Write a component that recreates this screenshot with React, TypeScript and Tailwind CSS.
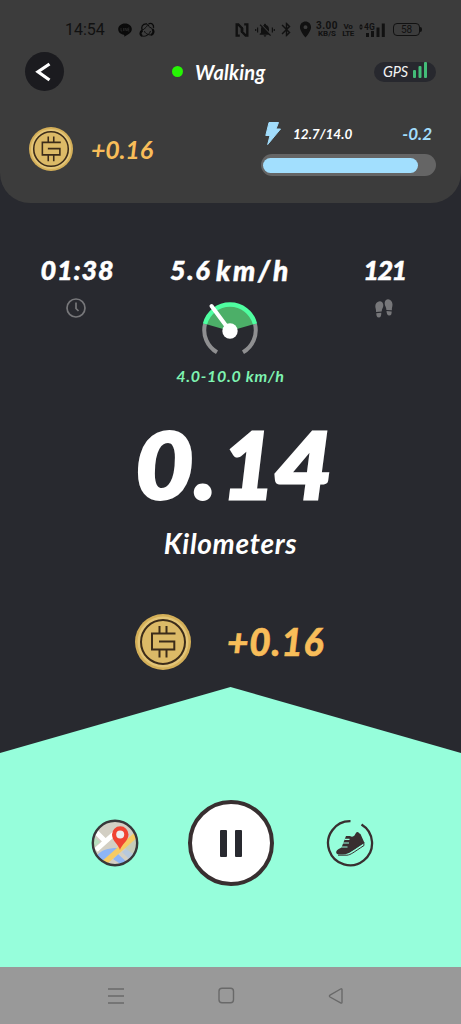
import type { ReactNode } from "react";
import { MdBluetooth, MdLocationOn, MdNotificationsOff } from "react-icons/md";

function Coin({ className }: { className: string }) {
  return (
    <svg viewBox="0 0 56 56" className={className} aria-hidden="true">
      <circle cx="28" cy="28" r="28" fill="#d4af58" />
      <circle cx="28" cy="28" r="25.5" fill="#e3c577" />
      <circle cx="28" cy="28" r="22" fill="#dcba67" stroke="#3c2c1a" strokeWidth="2" />
      <path
        d="M40.500 19.600H17V35.500H39.300V27.500H24M24.500 12V19.500M31.500 12V19.500M24.500 36V43.500M31.500 36V43.500"
        fill="none"
        stroke="#3c2c1a"
        strokeWidth="2"
      />
    </svg>
  );
}

function StatusBar() {
  return (
    <div className="flex h-[50px] items-center pl-[65px] pt-[9px] text-[#111]">
      <span className="w-[53px] font-['Roboto'] text-[16px] leading-4">14:54</span>
      <svg viewBox="0 0 14 14" className="h-[14px] w-[14px]">
        <path d="M7 .5C3 .5.2 3 .2 6.3c0 3 2.500 5 5.600 5.500.8.2.5 1.200.5 1.900 3-1.500 7.500-4 7.500-7.400C13.800 3 11 .5 7 .5Z" fill="#0a0a0a" />
        <path d="M3 5v3h1.300M5.500 5v3M7 8V5l2 3V5M11.500 5H10v3h1.500M10 6.500h1.300" fill="none" stroke="#333" strokeWidth=".6" />
      </svg>
      <svg viewBox="0 0 16 16" className="ml-[7px] h-4 w-4" fill="none" stroke="#0a0a0a">
        <path d="M3.500 8.500C1.500 5 3.500 1.500 8 2M9.500 1.800c3.500-1.300 5.500 1 5 4" strokeWidth="1.300" />
        <path d="M3.500 8.500C1 10 .8 12.500 3 14M13.500 7c1.700 2.500 1 5-1.500 6" strokeWidth="2.200" />
        <path d="M4 8c1-1.500 3.500-2 5-6M3 14c3.500 1 7-1 8.500-5M9.500 3c-.5 2 2.500 2.500 4 4M5.500 9c0 2 3.500 4 6.500 4" strokeWidth="1" />
      </svg>
      <svg viewBox="0 0 14 14" className="ml-[80px] h-[14px] w-[14px]" fill="none" stroke="#111" strokeWidth="2.400">
        <path d="M4.800 12.600H1.700V1.500h1.600L7.200 5.500V10M9.200 1.400h3.100v11.100h-1.600L6.800 8.500V4" />
      </svg>
      <span className="relative ml-[6px] flex w-[20px] justify-center">
        <MdNotificationsOff size={16} />
        <svg viewBox="0 0 20 16" className="absolute inset-0 h-4 w-5" stroke="currentColor" strokeWidth="1.200">
          <path d="M.7 7v2M2.600 5.500v5M17.400 5.500v5M19.300 7v2" />
        </svg>
      </span>
      <MdBluetooth size={17} className="ml-[3px]" />
      <MdLocationOn size={19} className="ml-[1px]" />
      <span className="ml-[1px] flex w-[22px] flex-col items-center whitespace-nowrap font-['Roboto'] font-bold">
        <span className="text-[10px] leading-[8px] tracking-[0.5px]">3.00</span>
        <span className="text-[8px] leading-[8px]">KB/S</span>
      </span>
      <span className="ml-[5px] flex w-[10px] flex-col items-center font-['Roboto'] text-[8px] font-bold leading-[7px] tracking-[-0.4px]">
        <span>Vo</span>
        <span>LTE</span>
      </span>
      <span className="relative ml-[6px] h-4 w-[26px]">
        <svg viewBox="0 0 26 16" className="h-4 w-[26px]" fill="currentColor">
          <path d="m0 4.500 2-2.500 2 2.500ZM0 5.500l2 2.500 2-2.500ZM7 11h3v4H7ZM12 9h3v6h-3ZM17.500 5.500h3V15h-3ZM22.800 1.500h3V15h-3Z" />
        </svg>
        <span className="absolute left-[5px] top-[1px] font-['Roboto'] text-[8.500px] font-bold leading-[8px]">4G</span>
      </span>
      <span className="ml-[8px] flex h-[13px] w-[27px] items-center justify-center rounded-[4px] border border-[#111] font-['Roboto'] text-[10px] leading-none">
        58
      </span>
      <span className="h-[5px] w-[2px] rounded-r-full bg-[#111]" />
    </div>
  );
}

function TopPanel() {
  return (
    <header className="h-[203px] rounded-b-[30px] bg-[#3c3c3c]">
      <StatusBar />
      <div className="flex h-[43px] items-center pl-[25px] pr-[25px]">
        <button type="button" aria-label="Back" className="grid h-[39px] w-[39px] place-items-center rounded-full bg-[#1b1b1f]">
          <svg viewBox="0 0 16 20" className="mr-[3px] h-5 w-4" fill="none" stroke="#fff" strokeWidth="3.200">
            <path d="M14.500 2 3 9.800l11.500 8.200" />
          </svg>
        </button>
        <span className="ml-[108px] h-[11px] w-[11px] rounded-full bg-[#26f404]" />
        <h1 className="ml-[12px] w-[120px] text-[20px] font-bold italic leading-6 tracking-[0.2px] text-white">Walking</h1>
        <div className="ml-auto flex h-[20px] w-[62px] items-center rounded-full bg-[#27282e] pl-[9px] text-[#f2f2f2]">
          <span className="w-[30px] text-[14.500px] italic leading-5 tracking-[-0.1px]">GPS</span>
          <svg viewBox="0 0 14 16" className="mb-[4px] h-4 w-[14px]" fill="#43bd78">
            <rect x="0" y="8" width="3" height="8" rx="1" />
            <rect x="5.500" y="4" width="3" height="12" rx="1" />
            <rect x="11" y="0" width="3" height="16" rx="1" />
          </svg>
        </div>
      </div>
      <div className="flex justify-between pl-[29px] pr-[25px] pt-[26px]">
        <div className="flex h-[59px] items-center">
          <Coin className="h-[44px] w-[44px]" />
          <span className="ml-[18px] mt-[1px] text-[25px] font-bold italic leading-8 tracking-[-0.2px] text-[#f8bd59]">+0.16</span>
        </div>
        <div className="w-[175px]">
          <div className="flex h-[29px] items-center pl-[4px] pr-[4px]">
            <svg viewBox="0 0 16 23" className="mr-[12px] h-[23px] w-4" fill="#a2ddfc">
              <path d="M4 .5h9.500L11 7h4.500L2.700 22.500 5 13.500H.8Z" stroke="#a2ddfc" strokeLinejoin="round" />
            </svg>
            <span className="text-[13.500px] font-bold italic leading-5 text-white">12.7/14.0</span>
            <span className="ml-auto text-[17px] font-bold italic leading-5 text-[#a2ddfc]">-0.2</span>
          </div>
          <div className="mt-[6px] flex h-[22px] items-center rounded-full bg-[#656565] pl-[2px]">
            <div className="h-[15px] w-[155px] rounded-full bg-[#a2dffe]" />
          </div>
        </div>
      </div>
    </header>
  );
}

function Stat({ value, children }: { value: ReactNode; children: ReactNode }) {
  return (
    <div className="flex flex-col items-center">
      <span className="flex h-8 items-center whitespace-nowrap text-[27px] font-black italic leading-8 text-white [-webkit-text-stroke:0.5px_white]">{value}</span>
      {children}
    </div>
  );
}

function Gauge() {
  return (
    <svg viewBox="0 0 60 60" className="mr-px mt-[15px] h-[60px] w-[60px]" fill="none">
      <path d="M30 30 4.800 22.800A26 26 0 0 1 55.200 22.800Z" fill="#4caf68" />
      <path d="M17 51.200A25.500 25.500 0 0 1 5 23M55 23A25.500 25.500 0 0 1 43 51.200" stroke="#8f8f91" strokeWidth="4" />
      <path d="M5 23A25.800 25.800 0 0 1 55 23" stroke="#4fffa1" strokeWidth="4.500" />
      <path d="m30 30-18.500-25" stroke="#fff" strokeWidth="4" strokeLinecap="round" />
      <circle cx="30" cy="30" r="7.700" fill="#fff" />
    </svg>
  );
}

function MapIcon() {
  return (
    <svg viewBox="0 0 48 48" className="h-12 w-12">
      <clipPath id="map">
        <circle cx="24" cy="24" r="22" />
      </clipPath>
      <g clipPath="url(#map)">
        <path d="M0 0h48v48H0Z" fill="#d3cfc4" />
        <path d="M5 31 25 13M5 13l9 9" stroke="#fff" strokeWidth="5" />
        <path d="m2 17 7 6-6 5Z" fill="#b9dfc0" />
        <path d="m33 28 15-13v21L38 33Z" fill="#c6ccb9" />
        <path d="M5 37c6-6 11-8 22-8l-15 13ZM27 35l12 11-5 2-12-8Z" fill="#8db5f5" />
        <path d="m31 33 9 9 5-5-10-7Z" fill="#b8c9dc" />
        <path d="M13 44 46 15" stroke="#f7cb63" strokeWidth="5.500" />
      </g>
      <path d="M29 31c-1-5-8-9-8-15.500a8.200 8.200 0 0 1 16.500 0C37.500 22 30 26 29 31Z" fill="#f04432" />
      <circle cx="29.200" cy="15.500" r="4" fill="#eee" />
      <circle cx="24" cy="24" r="22.200" fill="none" stroke="#38383a" strokeWidth="2.400" />
    </svg>
  );
}

function ShoeIcon() {
  return (
    <svg viewBox="0 0 48 48" className="h-12 w-12" fill="#382f30">
      <path d="M24.500 2.200A22 22 0 1 0 35.500 5.400" fill="none" stroke="#382f30" strokeWidth="2.300" />
      <path d="M20 17h4c1.500 1 3.500.8 4.500-.5 1-1.400 1.500-3.500 3-3.500 1 0 1.500 1.500 3 2l4 9L25 33c-3.500 2.500-7 2.500-11 2.500-3.500 0-4.300-1.500-3.500-3.500.7-1.700 3.500-2.300 5-3.500Z" />
      <path d="M15.500 28h6M17 24h6M18.500 20.300h5" stroke="#96fedb" strokeWidth="1.200" />
      <path d="M20 35.700c4-.3 7-3.700 18.500-10.700" fill="none" stroke="#96fedb" strokeWidth="1.300" />
      <path d="M12 36.200h9c4-.5 6-2.500 17-9.700l-.3-3.500" fill="none" stroke="#382f30" strokeWidth="1" />
    </svg>
  );
}

function FootstepsIcon() {
  return (
    <svg viewBox="0 0 18 20" className="mr-px mt-[13px] h-5 w-[18px]" fill="#77777a">
      <path d="M4.800 2.200c2.500-.2 3.700 2 3.500 4.800-.2 2-1.500 3-1.600 5.500L1 13C1.300 10.500.2 9 .3 7c0-2.700 2-4.600 4.500-4.800ZM1.300 14.200l5-.5c0 2.800-.5 4.800-2.500 4.800s-2.500-2-2.500-4.300ZM12.800.3c2.500-.2 4.500 2 4.700 4.900.1 2.200-.8 3.500-.6 6l-5.500-.3c0-2.500-1.500-3.800-1.700-5.900-.2-2.500.8-4.500 3.100-4.700ZM11.500 12l5.200.4c0 2.300-.4 4-2.400 4.100-1.900.1-2.700-2-2.800-4.500Z" />
    </svg>
  );
}

function NavBar() {
  return (
    <nav className="h-[57px] bg-[#999] pl-[107px] pt-[19px]">
      <svg viewBox="0 0 240 20" className="h-5 w-[240px]" fill="none" stroke="#696969" strokeWidth="1.400">
        <path d="M1 3H17M1 10H17M1 17H17" />
        <rect x="112" y="2.300" width="14.500" height="14.500" rx="3" />
        <path d="M235 3.500v12.800c0 .8-.7 1-1.400.6L223 11c-.8-.5-.8-1.400 0-1.900L233.600 3c.7-.4 1.400-.2 1.400.5Z" />
      </svg>
    </nav>
  );
}

export default function App() {
  return (
    <div className="flex h-[1024px] w-[461px] flex-col overflow-hidden bg-[#28292f] font-['Lato',sans-serif]">
      <TopPanel />
      <main className="flex h-[484px] flex-col items-center">
        <section className="mt-[51px] grid h-[133px] w-full grid-cols-[153px_155px_153px]">
          <Stat value={<span className="ml-[2px] tracking-[0.9px]">01:38</span>}>
            <svg viewBox="0 0 20 20" className="mr-px mt-[12px] h-5 w-5" fill="none" stroke="#77777a" strokeWidth="1.700">
              <circle cx="10" cy="10" r="9" />
              <path d="M10 4.500v6l2.500 2.500" />
            </svg>
          </Stat>
          <Stat
            value={
              <>
                <span className="mr-[5px] tracking-[1.500px]">5.6</span>
                <span className="text-[28px] tracking-[2.700px]">km/h</span>
              </>
            }
          >
            <Gauge />
            <span className="mt-[5px] whitespace-nowrap text-[16px] font-bold italic leading-5 tracking-[0.700px] text-[#7ef3b1]">4.0-10.0 km/h</span>
          </Stat>
          <Stat value={<span className="tracking-[-1.500px]">121</span>}>
            <FootstepsIcon />
          </Stat>
        </section>
        <div className="mt-[27px] flex h-[100px] text-[91px] font-black italic leading-[100px] text-white [-webkit-text-stroke:3px_white]">
          <span className="ml-[7px] inline-block scale-x-110">0</span>
          <span className="ml-[3px]">.</span>
          <span className="ml-[6px]">1</span>
          <span className="ml-[2px] inline-block scale-x-110">4</span>
        </div>
        <div className="mt-[13px] text-[28px] font-bold italic leading-8 tracking-[0.700px] text-white">Kilometers</div>
        <div className="mr-[2px] mt-[55px] flex items-center">
          <Coin className="h-[56px] w-[56px]" />
          <span className="ml-[36px] text-[37px] font-black italic leading-[40px] tracking-[0.800px] text-[#f8bd59] [-webkit-text-stroke:0.600px_#f8bd59]">+0.16</span>
        </div>
      </main>
      <footer className="flex h-[280px] items-start justify-center bg-[#96fedb] pl-[3px] pt-[113px] [clip-path:polygon(0_66px,50%_0,100%_66px,100%_100%,0_100%)]">
        <div className="flex items-center">
          <button type="button" aria-label="Map">
            <MapIcon />
          </button>
          <button type="button" aria-label="Pause" className="ml-[49px] mr-[52px] flex h-[86px] w-[86px] items-center justify-center gap-[8px] rounded-full border-[4px] border-[#382f30] bg-white">
            <span className="h-[27px] w-[7px] rounded-[1px] bg-[#28292f]" />
            <span className="h-[27px] w-[7px] rounded-[1px] bg-[#28292f]" />
          </button>
          <button type="button" aria-label="Shoes">
            <ShoeIcon />
          </button>
        </div>
      </footer>
      <NavBar />
    </div>
  );
}
